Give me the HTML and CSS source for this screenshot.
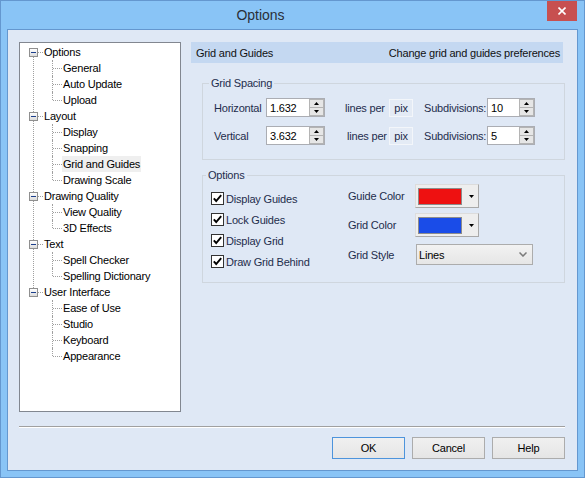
FILE: index.html
```html
<!DOCTYPE html>
<html>
<head>
<meta charset="utf-8">
<link rel="stylesheet" href="styles.css">
</head>
<body>
<div class="window">
  <div class="titlebar">
    <div class="title">Options</div>
    <div class="close"><svg width="8" height="8" viewBox="0 0 8 8"><path d="M0.5 0.5 L7.5 7.5 M7.5 0.5 L0.5 7.5" stroke="#fff" stroke-width="1.6"/></svg></div>
  </div>
  <div class="client">
    <div class="main">
      <div class="tree">
        <ul class="tree-list">
          <li class="node">
            <div class="row"><span class="exp"></span><span class="hconn"></span><span class="label">Options</span></div>
            <ul>
              <li class="leaf"><div class="row"><span class="hconn2"></span><span class="label">General</span></div></li>
              <li class="leaf"><div class="row"><span class="hconn2"></span><span class="label">Auto Update</span></div></li>
              <li class="leaf"><div class="row"><span class="hconn2"></span><span class="label">Upload</span></div></li>
            </ul>
          </li>
          <li class="node">
            <div class="row"><span class="exp"></span><span class="hconn"></span><span class="label">Layout</span></div>
            <ul>
              <li class="leaf"><div class="row"><span class="hconn2"></span><span class="label">Display</span></div></li>
              <li class="leaf"><div class="row"><span class="hconn2"></span><span class="label">Snapping</span></div></li>
              <li class="leaf"><div class="row"><span class="hconn2"></span><span class="label selected">Grid and Guides</span></div></li>
              <li class="leaf"><div class="row"><span class="hconn2"></span><span class="label">Drawing Scale</span></div></li>
            </ul>
          </li>
          <li class="node">
            <div class="row"><span class="exp"></span><span class="hconn"></span><span class="label">Drawing Quality</span></div>
            <ul>
              <li class="leaf"><div class="row"><span class="hconn2"></span><span class="label">View Quality</span></div></li>
              <li class="leaf"><div class="row"><span class="hconn2"></span><span class="label">3D Effects</span></div></li>
            </ul>
          </li>
          <li class="node">
            <div class="row"><span class="exp"></span><span class="hconn"></span><span class="label">Text</span></div>
            <ul>
              <li class="leaf"><div class="row"><span class="hconn2"></span><span class="label">Spell Checker</span></div></li>
              <li class="leaf"><div class="row"><span class="hconn2"></span><span class="label">Spelling Dictionary</span></div></li>
            </ul>
          </li>
          <li class="node">
            <div class="row"><span class="exp"></span><span class="hconn"></span><span class="label">User Interface</span></div>
            <ul>
              <li class="leaf"><div class="row"><span class="hconn2"></span><span class="label">Ease of Use</span></div></li>
              <li class="leaf"><div class="row"><span class="hconn2"></span><span class="label">Studio</span></div></li>
              <li class="leaf"><div class="row"><span class="hconn2"></span><span class="label">Keyboard</span></div></li>
              <li class="leaf"><div class="row"><span class="hconn2"></span><span class="label">Appearance</span></div></li>
            </ul>
          </li>
        </ul>
      </div>
      <div class="panel">
        <div class="header"><span>Grid and Guides</span><span>Change grid and guides preferences</span></div>
        <fieldset class="group spacing">
          <legend>Grid Spacing</legend>
          <div class="srows">
            <div class="srow">
              <span class="slabel">Horizontal</span>
              <div class="spin"><span class="val">1.632</span><span class="arrows"><span class="ab"><svg width="5" height="3" viewBox="0 0 5 3"><path d="M0 3 L2.5 0 L5 3Z" fill="#000"/></svg></span><span class="ab"><svg width="5" height="3" viewBox="0 0 5 3"><path d="M0 0 L2.5 3 L5 0Z" fill="#000"/></svg></span></span></div>
              <span class="lines">lines per</span>
              <span class="pix">pix</span>
              <span class="sublabel">Subdivisions:</span>
              <div class="spin small"><span class="val">10</span><span class="arrows"><span class="ab"><svg width="5" height="3" viewBox="0 0 5 3"><path d="M0 3 L2.5 0 L5 3Z" fill="#000"/></svg></span><span class="ab"><svg width="5" height="3" viewBox="0 0 5 3"><path d="M0 0 L2.5 3 L5 0Z" fill="#000"/></svg></span></span></div>
            </div>
            <div class="srow">
              <span class="slabel">Vertical</span>
              <div class="spin"><span class="val">3.632</span><span class="arrows"><span class="ab"><svg width="5" height="3" viewBox="0 0 5 3"><path d="M0 3 L2.5 0 L5 3Z" fill="#000"/></svg></span><span class="ab"><svg width="5" height="3" viewBox="0 0 5 3"><path d="M0 0 L2.5 3 L5 0Z" fill="#000"/></svg></span></span></div>
              <span class="lines v">lines per</span>
              <span class="pix">pix</span>
              <span class="sublabel">Subdivisions:</span>
              <div class="spin small"><span class="val">5</span><span class="arrows"><span class="ab"><svg width="5" height="3" viewBox="0 0 5 3"><path d="M0 3 L2.5 0 L5 3Z" fill="#000"/></svg></span><span class="ab"><svg width="5" height="3" viewBox="0 0 5 3"><path d="M0 0 L2.5 3 L5 0Z" fill="#000"/></svg></span></span></div>
            </div>
          </div>
        </fieldset>
        <fieldset class="group options">
          <legend>Options</legend>
          <div class="opts">
            <div class="checks">
              <div class="check"><svg width="13" height="13" viewBox="0 0 13 13"><rect x="0.5" y="0.5" width="12" height="12" fill="#fff" stroke="#333"/><path d="M2.8 6.3 L5.2 9 L10.2 3.2" fill="none" stroke="#000" stroke-width="1.9"/></svg><span>Display Guides</span></div>
              <div class="check"><svg width="13" height="13" viewBox="0 0 13 13"><rect x="0.5" y="0.5" width="12" height="12" fill="#fff" stroke="#333"/><path d="M2.8 6.3 L5.2 9 L10.2 3.2" fill="none" stroke="#000" stroke-width="1.9"/></svg><span>Lock Guides</span></div>
              <div class="check"><svg width="13" height="13" viewBox="0 0 13 13"><rect x="0.5" y="0.5" width="12" height="12" fill="#fff" stroke="#333"/><path d="M2.8 6.3 L5.2 9 L10.2 3.2" fill="none" stroke="#000" stroke-width="1.9"/></svg><span>Display Grid</span></div>
              <div class="check"><svg width="13" height="13" viewBox="0 0 13 13"><rect x="0.5" y="0.5" width="12" height="12" fill="#fff" stroke="#333"/><path d="M2.8 6.3 L5.2 9 L10.2 3.2" fill="none" stroke="#000" stroke-width="1.9"/></svg><span>Draw Grid Behind</span></div>
            </div>
            <div class="colors">
              <div class="crow r1"><span class="clabel">Guide Color</span><div class="colorbtn"><span class="swatch red"></span><svg class="drop" width="5" height="3" viewBox="0 0 5 3"><path d="M0 0 L2.5 3 L5 0Z" fill="#000"/></svg></div></div>
              <div class="crow r2"><span class="clabel">Grid Color</span><div class="colorbtn"><span class="swatch blue"></span><svg class="drop" width="5" height="3" viewBox="0 0 5 3"><path d="M0 0 L2.5 3 L5 0Z" fill="#000"/></svg></div></div>
              <div class="crow r3"><span class="clabel">Grid Style</span><div class="select"><span>Lines</span><svg width="8" height="5" viewBox="0 0 8 5"><path d="M0.5 0.5 L4 4 L7.5 0.5" fill="none" stroke="#7a7a7a" stroke-width="1.5"/></svg></div></div>
            </div>
          </div>
        </fieldset>
      </div>
    </div>
    <div class="separator"></div>
    <div class="buttons">
      <button class="btn default">OK</button>
      <button class="btn">Cancel</button>
      <button class="btn">Help</button>
    </div>
  </div>
</div>
</body>
</html>
```
FILE: styles.css
```css
html, body {
  margin: 0;
  padding: 0;
  background: #89c4f6;
}
body {
  font-family: "Liberation Sans", Arial, sans-serif;
  font-size: 11px;
  letter-spacing: -0.2px;
  color: #000;
}
.window {
  width: 585px;
  height: 478px;
  box-sizing: border-box;
  border: 1px solid #6497cf;
  background: #89c4f6;
  display: flex;
  flex-direction: column;
}
.titlebar {
  height: 28px;
  display: flex;
  align-items: flex-start;
}
.title {
  flex: 1;
  text-align: center;
  padding-right: 27px;
  font-size: 14px;
  letter-spacing: 0;
  line-height: 28px;
  color: #2a2f38;
}
.close {
  width: 30px;
  height: 20px;
  margin-right: 7px;
  background: #c75050;
  display: flex;
  align-items: center;
  justify-content: center;
}
.client {
  flex: 1;
  margin: 0 6px 6px;
  border: 1px solid #6497cf;
  background: #dfe8f5;
  padding: 12px 12px 11px 11px;
  display: flex;
  flex-direction: column;
}
.main {
  display: flex;
  gap: 10px;
  height: 370px;
}
/* tree */
.tree {
  width: 162px;
  flex: none;
  box-sizing: border-box;
  border: 1px solid #828790;
  background: #fff;
  padding-top: 1px;
}
.tree ul {
  list-style: none;
  margin: 0;
  padding: 0;
}
.row {
  display: flex;
  align-items: center;
  height: 16px;
}
.node {
  position: relative;
}
.node:not(:last-child)::before {
  content: "";
  position: absolute;
  left: 13px;
  top: 8px;
  bottom: -8px;
  border-left: 1px dotted #a0a0a0;
}
.node > .row {
  padding-left: 9px;
}
.exp {
  width: 9px;
  height: 9px;
  box-sizing: border-box;
  border: 1px solid #8f8f8f;
  background: linear-gradient(#ffffff, #dcdcdc);
  position: relative;
  z-index: 1;
  flex: none;
}
.exp::after {
  content: "";
  position: absolute;
  left: 1px;
  top: 3px;
  width: 5px;
  height: 1px;
  background: #1c3f8c;
}
.hconn {
  width: 5px;
  height: 0;
  border-top: 1px dotted #a0a0a0;
  flex: none;
}
.leaf {
  position: relative;
}
.leaf::before {
  content: "";
  position: absolute;
  left: 32px;
  top: 0;
  height: 16px;
  border-left: 1px dotted #a0a0a0;
}
.leaf:last-child::before {
  height: 8px;
}
.leaf > .row {
  padding-left: 33px;
}
.hconn2 {
  width: 9px;
  height: 0;
  border-top: 1px dotted #a0a0a0;
  flex: none;
}
.label {
  padding: 0 1px;
  line-height: 16px;
  white-space: nowrap;
}
.label.selected {
  background: #efefef;
}
/* panel */
.panel {
  flex: 1;
  display: flex;
  flex-direction: column;
  color: #1e2d4c;
}
.header {
  height: 21px;
  margin-right: 2px;
  background: #c4d8f1;
  display: flex;
  justify-content: space-between;
  align-items: center;
  padding: 0 3px 0 5px;
  color: #111;
}
.group {
  margin: 14px 0 0 11px;
  border: 1px solid #cfd6de;
  min-width: 0;
}
.group legend {
  padding: 0 2px;
  margin-left: -5px;
  line-height: 13px;
  font-size: 11px;
}
.spacing {
  padding: 8px 0 14px 11px;
}
.srows {
  display: flex;
  flex-direction: column;
  gap: 9px;
}
.srow {
  display: flex;
  align-items: center;
  height: 19px;
}
.slabel {
  width: 52px;
  flex: none;
}
.spin {
  width: 59px;
  height: 19px;
  flex: none;
  box-sizing: border-box;
  border: 1px solid #abadb3;
  background: #fff;
  display: flex;
  align-items: center;
  justify-content: space-between;
  padding-left: 3px;
  color: #000;
}
.spin.small {
  width: 48px;
}
.arrows {
  width: 15px;
  height: 17px;
  box-sizing: border-box;
  border: 1px solid #b4b4b4;
  display: flex;
  flex-direction: column;
  background: #e6e6e6;
}
.ab {
  flex: 1;
  display: flex;
  align-items: center;
  justify-content: center;
}
.ab + .ab {
  border-top: 1px solid #b4b4b4;
}
.lines {
  margin-left: 20px;
  width: 44px;
  flex: none;
}
.lines.v {
  margin-left: 22px;
  width: 42px;
}
.pix {
  width: 24px;
  height: 18px;
  flex: none;
  box-sizing: border-box;
  border: 1px solid #f3f6fa;
  background: #e4ebf5;
  display: flex;
  align-items: center;
  justify-content: center;
}
.sublabel {
  margin-left: 11px;
  width: 63px;
  flex: none;
  white-space: nowrap;
}
/* options */
.options {
  margin-top: 9px;
  padding: 2px 0 14px 8px;
}
.opts {
  display: flex;
}
.checks {
  width: 137px;
  flex: none;
  padding-top: 8px;
  display: flex;
  flex-direction: column;
  gap: 8px;
}
.check {
  display: flex;
  align-items: center;
  height: 13px;
  gap: 2px;
}
.check svg {
  flex: none;
}
.colors {
  display: flex;
  flex-direction: column;
}
.crow {
  display: flex;
  align-items: center;
}
.crow.r1 { height: 24px; margin-bottom: 5px; }
.crow.r2 { height: 24px; margin-bottom: 7px; }
.crow.r3 { height: 21px; }
.clabel {
  width: 67px;
  flex: none;
}
.colorbtn {
  width: 64px;
  height: 24px;
  box-sizing: border-box;
  border: 1px solid;
  border-color: #dcdcdc #a9a9a9 #a9a9a9 #dcdcdc;
  background: #eeeeee;
  display: flex;
  align-items: center;
  padding-left: 2px;
}
.swatch {
  width: 44px;
  height: 17px;
  box-sizing: border-box;
  border: 1px solid #8c8c8c;
}
.swatch.red { background: #ee1111; }
.swatch.blue { background: #1a4ce8; }
.drop {
  margin-left: 7px;
}
.select {
  margin-left: 1px;
  width: 117px;
  height: 21px;
  box-sizing: border-box;
  border: 1px solid #acacac;
  background: linear-gradient(#f2f2f2, #e6e6e6);
  display: flex;
  align-items: center;
  justify-content: space-between;
  padding: 0 5px 0 2px;
  color: #000;
}
/* bottom */
.separator {
  margin-top: 14px;
  border-top: 1px solid #a0a0a0;
  border-bottom: 1px solid #ffffff;
}
.buttons {
  margin-top: 9px;
  display: flex;
  justify-content: flex-end;
  gap: 7px;
}
.btn {
  width: 73px;
  height: 22px;
  padding: 0;
  font-family: "Liberation Sans", Arial, sans-serif;
  font-size: 11px;
  letter-spacing: -0.2px;
  color: #000;
  background: linear-gradient(#f0f0f0, #e5e5e5);
  border: 1px solid #acacac;
  border-radius: 0;
}
.btn.default {
  border-color: #4d94dc;
}
```
